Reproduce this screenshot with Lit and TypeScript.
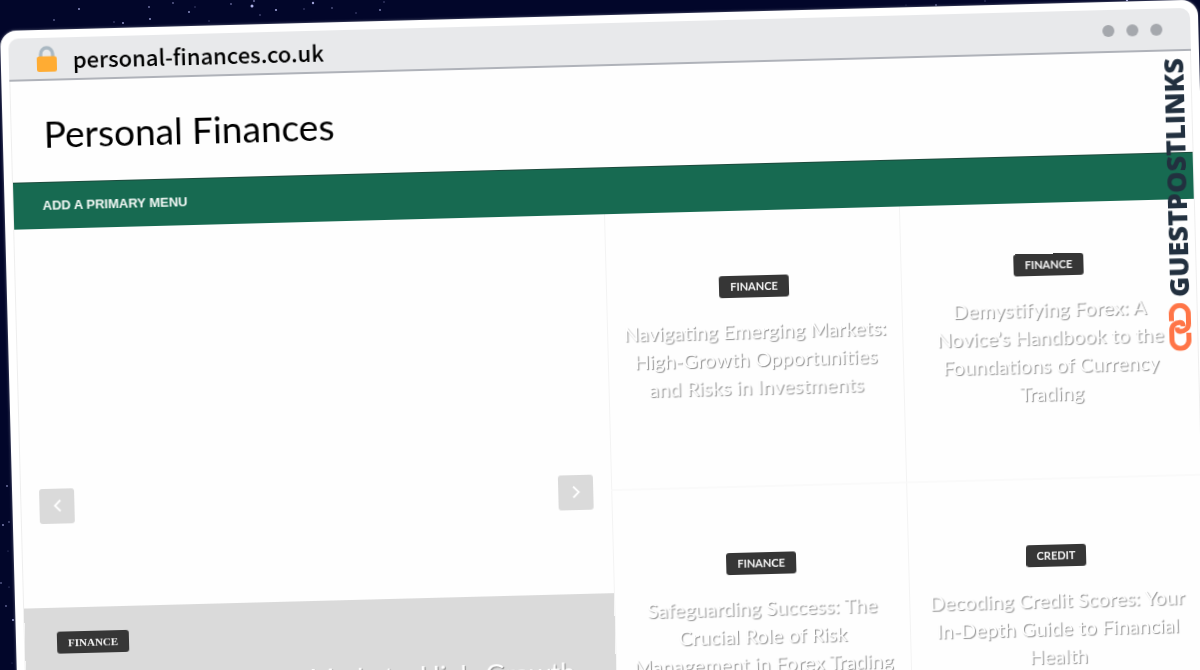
import { LitElement, html, svg, css } from "lit";
import { customElement, property } from "lit/decorators.js";

interface Post {
  tag: string;
  title: string;
}

const posts: Post[] = [
  { tag: "Finance", title: "Navigating Emerging Markets: High-Growth Opportunities and Risks in Investments" },
  { tag: "Finance", title: "Demystifying Forex: A Novice’s Handbook to the Foundations of Currency Trading" },
  { tag: "Finance", title: "Safeguarding Success: The Crucial Role of Risk Management in Forex Trading" },
  { tag: "Credit", title: "Decoding Credit Scores: Your In-Depth Guide to Financial Health" },
];

// x, y, radius, opacity of each star in the night sky
const stars: number[][] = [
  [79, 9, 0.9, 0.8], [54, 20, 0.8, 0.7], [114, 22, 0.7, 0.5], [123, 23, 0.9, 0.8], [149, 7, 0.9, 0.6],
  [150, 19, 0.9, 0.8], [173, 3, 0.9, 0.5], [189, 12, 1, 0.7], [195, 7, 0.7, 0.4], [209, 21, 0.7, 0.4],
  [231, 4, 0.9, 0.5], [252, 6, 1.5, 0.9], [254, 1, 0.9, 0.6], [260, 15, 0.8, 0.5], [276, 10, 1.1, 0.8],
  [304, 9, 0.8, 0.4], [313, 3, 1.2, 0.8], [332, 8, 0.9, 0.4], [356, 13, 0.8, 0.4], [380, 10, 1, 0.6],
  [384, 2, 0.8, 0.4], [936, 5, 0.8, 0.7], [985, 1, 0.7, 0.4], [1127, 0, 1.2, 0.9], [906, 5, 0.6, 0.3],
  [7, 486, 0.9, 0.6], [9, 522, 0.9, 0.4], [3, 525, 0.9, 0.7], [8, 551, 0.6, 0.4], [1, 583, 0.8, 0.7],
  [9, 587, 0.6, 0.5], [6, 606, 0.9, 0.5], [13, 620, 0.9, 0.9], [12, 663, 0.6, 0.3],
];

@customElement("post-tag")
export class PostTag extends LitElement {
  static styles = css`
    :host {
      display: flex;
    }
    .tag {
      background: #363636;
      color: #f4f4f4;
      border-radius: 3px;
      padding: 0 11px;
      font-size: 11px;
      font-weight: 700;
      line-height: 22px;
      text-transform: uppercase;
      text-decoration: none;
    }
  `;
  render() {
    return html`<a class="tag" href="#"><slot></slot></a>`;
  }
}

@customElement("post-card")
export class PostCard extends LitElement {
  @property({ attribute: false }) post: Post = posts[0];

  static styles = css`
    :host {
      display: flex;
      flex-direction: column;
      align-items: center;
      justify-content: center;
      gap: 19px;
      box-sizing: border-box;
      padding: 0 13px 20px;
      border-left: 1px solid #f3f3f3;
      border-bottom: 2px solid #fafafa;
      text-align: center;
    }
    .title {
      margin: 0;
      font-size: 20px;
      font-weight: 400;
      line-height: 28px;
    }
    .link {
      color: #fff;
      text-decoration: none;
      text-shadow: 1px 1px 1px rgba(0, 0, 0, 0.45);
    }
  `;
  render() {
    return html`
      <post-tag>${this.post.tag}</post-tag>
      <h2 class="title"><a class="link" href="#">${this.post.title}</a></h2>
    `;
  }
}

@customElement("app-root")
export class AppRoot extends LitElement {
  static styles = css`
    :host {
      display: flow-root;
      position: relative;
      height: 100vh;
      overflow: hidden;
      background: #02062a;
      font-family: Lato, sans-serif;
    }
    .sky {
      position: absolute;
      inset: 0;
      width: 100%;
      height: 100%;
    }
    .window {
      position: relative;
      box-sizing: border-box;
      margin: 31px 2px 0 0;
      padding: 8px;
      border-radius: 16px;
      background: #fff;
      transform: rotate(-1.5deg);
      transform-origin: 0 0;
      will-change: transform;
      box-shadow: 0 0 3px rgba(255, 255, 255, 0.4);
    }
    .bar {
      display: flex;
      align-items: center;
      height: 41px;
      padding: 0 28px;
      background: #e8e9eb;
      border-bottom: 2px solid #afb2b9;
      border-radius: 10px 10px 0 0;
    }
    .lock {
      width: 20px;
      height: 26px;
      margin-right: 16px;
    }
    .address {
      flex: 1;
      font-family: "Noto Sans CJK JP", sans-serif;
      font-size: 22px;
      font-weight: 500;
      line-height: 32px;
      color: #000;
    }
    .dots {
      display: flex;
      gap: 12px;
    }
    .dot {
      width: 12px;
      height: 12px;
      border-radius: 50%;
      background: #a5a8ad;
    }
    .page {
      background: #fefefe;
      border: solid #eee;
      border-width: 0 1px;
    }
    .header {
      display: flex;
      align-items: center;
      box-sizing: border-box;
      height: 101px;
      padding: 4px 32px 0;
    }
    .site {
      margin: 0;
      font-size: 37px;
      font-weight: 400;
      line-height: 48px;
      color: #000;
    }
    .menu {
      display: flex;
      align-items: center;
      height: 46px;
      padding: 0 29px;
      background: #176a51;
      border-top: 1px solid #1c4a3c;
    }
    .menu-link {
      font-family: "Liberation Sans", sans-serif;
      font-size: 13px;
      font-weight: 700;
      line-height: 20px;
      color: #f2f8f5;
      text-decoration: none;
      text-transform: uppercase;
    }
    .grid {
      display: grid;
      grid-template-columns: 2fr 1fr 1fr;
      grid-auto-rows: 277px;
    }
    .hero {
      grid-row: span 2;
      display: flex;
      flex-direction: column;
      position: relative;
    }
    .arrows {
      position: absolute;
      inset: 0 18px;
      display: flex;
      align-items: center;
      justify-content: space-between;
    }
    .arrow {
      display: grid;
      place-items: center;
      width: 35px;
      height: 35px;
      padding: 0;
      border: 0;
      border-radius: 3px;
      background: #dadada;
    }
    .caption {
      margin-top: auto;
      box-sizing: border-box;
      min-height: 175px;
      padding: 24px 16px 24px 32px;
      background: #dadada;
    }
    .hero-tag {
      font-family: "Liberation Serif", serif;
    }
    .hero-title {
      margin: 12px 0 0;
      font-size: 27px;
      font-weight: 400;
      line-height: 40px;
    }
    .hero-link {
      color: #fff;
      text-decoration: none;
      text-shadow: 1px 1px 1px rgba(0, 0, 0, 0.4);
    }
    .brand {
      position: absolute;
      top: 58px;
      right: 14px;
      display: flex;
      align-items: center;
      gap: 6px;
      writing-mode: vertical-rl;
      transform: rotate(180deg);
      color: #22303f;
      font-family: "Open Sans", sans-serif;
      font-size: 27px;
      font-weight: 800;
      line-height: 24px;
    }
    .chain {
      width: 22px;
      height: 48px;
    }
  `;

  render() {
    return html`
      <svg class="sky" aria-hidden="true">
        ${stars.map(([x, y, r, o]) => svg`<circle cx=${x} cy=${y} r=${r} fill="#c3c6ff" opacity=${o}></circle>`)}
      </svg>
      <div class="window">
        <div class="bar">
          <svg class="lock" viewBox="0 0 20 26" aria-hidden="true">
            <path d="M4 13V8.500a6 6.500 0 0 1 12 0V13" fill="none" stroke="#aab8c2" stroke-width="3.400" />
            <rect x="0" y="10.500" width="20" height="15.500" rx="2.500" fill="#ffac33" />
          </svg>
          <span class="address">personal-finances.co.uk</span>
          <div class="dots"><span class="dot"></span><span class="dot"></span><span class="dot"></span></div>
        </div>
        <main class="page">
          <header class="header"><h1 class="site">Personal Finances</h1></header>
          <nav class="menu"><a class="menu-link" href="#">Add a primary menu</a></nav>
          <section class="grid">
            <article class="hero">
              <div class="caption">
                <post-tag class="hero-tag">Finance</post-tag>
                <h2 class="hero-title"><a class="hero-link" href="#">${posts[0].title}</a></h2>
              </div>
              <div class="arrows">
                <button class="arrow" aria-label="Previous">
                  <svg width="10" height="14" viewBox="0 0 10 14"><path d="M8 1.500L2.500 7L8 12.500" fill="none" stroke="#fff" stroke-width="1.800" /></svg>
                </button>
                <button class="arrow" aria-label="Next">
                  <svg width="10" height="14" viewBox="0 0 10 14"><path d="M2 1.500L7.500 7L2 12.500" fill="none" stroke="#fff" stroke-width="1.800" /></svg>
                </button>
              </div>
            </article>
            ${posts.map((post) => html`<post-card .post=${post}></post-card>`)}
          </section>
        </main>
        <div class="brand">
          <svg class="chain" viewBox="0 0 22 48" aria-hidden="true">
            <g fill="none" stroke="#ff7547" stroke-width="5">
              <path d="M2.500 18V11a8.500 8.500 0 0 1 17 0V20.500c0 5-3.500 8-8.500 8c-2.200 0-3-1.500-3-4" />
              <path d="M19.500 30V37a8.500 8.500 0 0 1-17 0V27.500c0-5 3.500-8 8.500-8c2.200 0 3 1.500 3 4" />
            </g>
          </svg>
          <span>GUESTPOSTLINKS</span>
        </div>
      </div>
    `;
  }
}
